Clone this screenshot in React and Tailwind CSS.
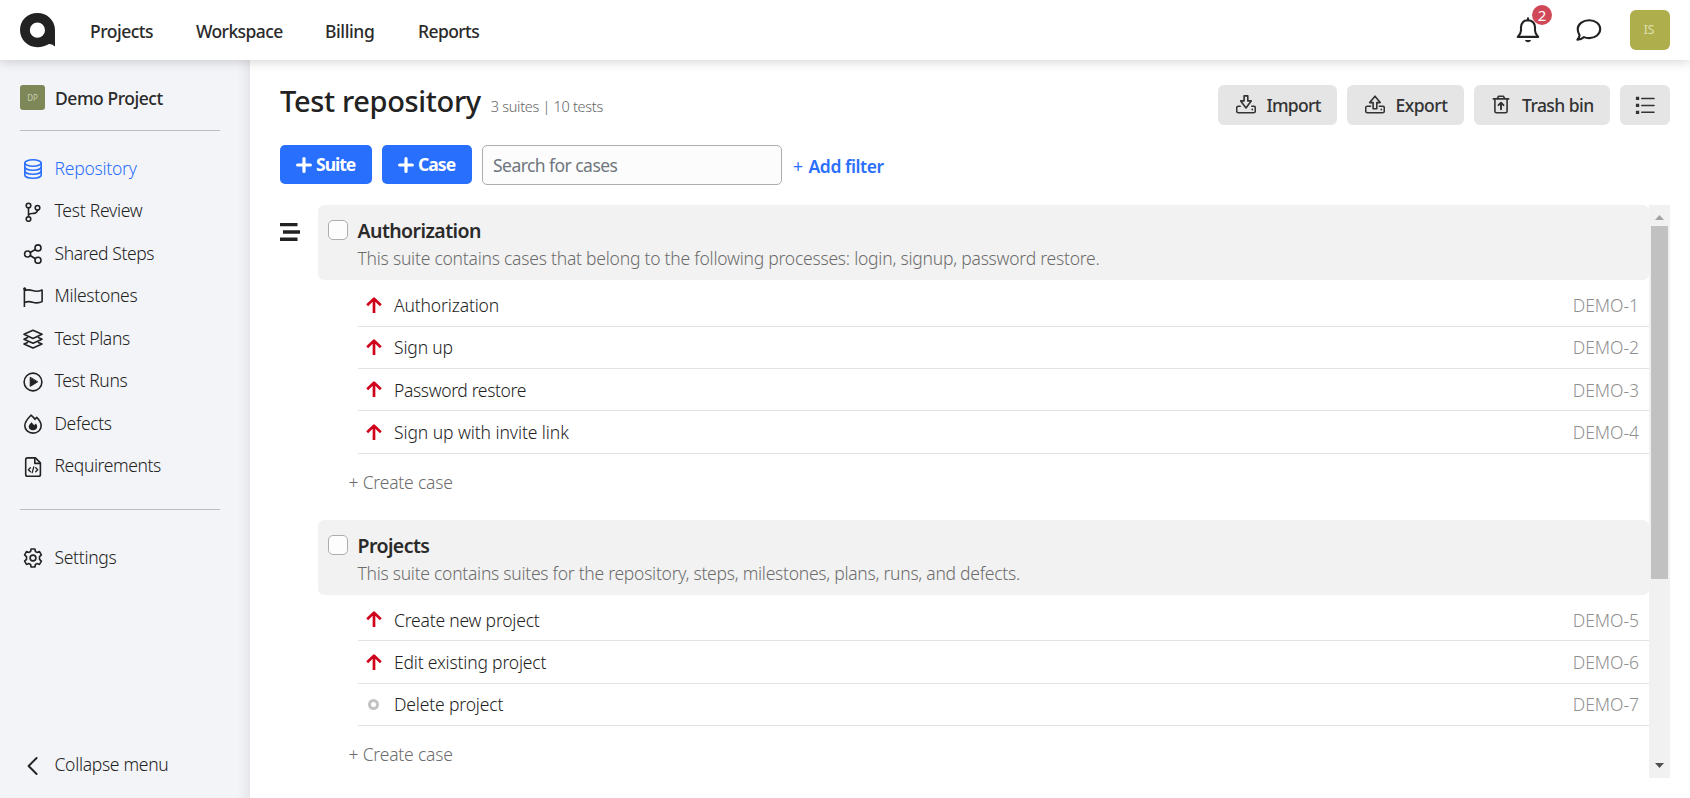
import React from "react";

const paths = {
  database: (
    <>
      <ellipse cx="10" cy="4" rx="8.2" ry="3.2" />
      <path d="M1.8 4v12c0 1.8 3.6 3.2 8.2 3.2s8.2-1.4 8.2-3.2V4" />
      <path d="M1.8 8c0 1.8 3.6 3.2 8.2 3.2S18.2 9.8 18.2 8M1.8 12c0 1.8 3.6 3.2 8.2 3.2s8.2-1.4 8.2-3.2" />
    </>
  ),
  branch: (
    <>
      <circle cx="5.5" cy="3.5" r="2.3" />
      <circle cx="14.5" cy="5.8" r="2.3" />
      <circle cx="5.5" cy="17" r="2.3" />
      <path d="M5.5 5.8v8.9M5.5 13.200c.6-1.200 1.600-1.700 3.600-1.700 3 0 5.200-.7 5.400-3.400" />
    </>
  ),
  share: (
    <>
      <circle cx="4.600" cy="10" r="3" />
      <circle cx="15" cy="3.900" r="3" />
      <circle cx="15" cy="16.300" r="3" />
      <path d="m7.200 8.500 5.200-3M7.200 11.500l5.200 3.200" />
    </>
  ),
  flag: (
    <>
      <path d="M1.400 1.500V19.600M1.400 3.600c3-1.300 5.300-.9 8.100 0 3.200 1.100 6.200.9 9.600-.6v11.600c-3.200 1.600-6.200 1.600-9.600.6-3-.9-5.400-.8-8.100.4" />
      <circle cx="1.700" cy="1.700" r="1.500" fill="currentColor" stroke="none" />
    </>
  ),
  layers: (
    <>
      <path d="M10 1.200 19 5.300 10 9.400 1 5.300z" />
      <path d="M4.600 8.600 1 10.200l9 4.100 9-4.100-3.600-1.600" />
      <path d="M4.600 13.400 1 15l9 4.100L19 15l-3.600-1.600" />
    </>
  ),
  play: (
    <>
      <circle cx="10" cy="10" r="8.900" />
      <path d="M7.200 5.600v8.800l7.200-4.400z" fill="currentColor" strokeWidth="1" />
    </>
  ),
  fire: (
    <>
      <path d="M8 1.200c1.500 1.200 2.800 2.500 4 4.100.5-.7 1-1.300 1.700-1.900 2.500 2.500 4.500 5.600 4.500 8.200 0 4.400-3.500 7.500-8.200 7.500s-8.200-3.200-8.200-7.500C1.800 8.500 4.600 4.600 8 1.200z" />
      <path d="M8.500 8.200c1 1 1.700 1.900 2.700 3l1.700-1.700c1.300 1.700 1.500 2.900 1.200 4.100-.5 1.800-2 2.700-4.100 2.700-2.500 0-4.300-1.400-4.300-3.600 0-1.500 1.300-2.900 2.800-4.500z" fill="currentColor" stroke="none" />
    </>
  ),
  filecode: (
    <>
      <path d="M4.400.9h8l5 5v11.500c0 1-.7 1.800-1.700 1.800H4.400c-1 0-1.700-.8-1.700-1.800V2.700c0-1 .7-1.800 1.700-1.800z" />
      <path d="M11.800 1.200v5.200H17" />
      <path d="m7.400 10.700-2 2 2 2M12.700 10.700l2 2-2 2M10.800 9.800l-1.600 5.900" strokeWidth="1.300" />
    </>
  ),
  gear: (
    <>
      <path d="M8.100 1h3.800l.5 2.500 1.600.9 2.500-.8 1.900 3.200-1.900 1.800v2.800l1.900 1.800-1.900 3.200-2.500-.8-1.600.9-.5 2.500H8.100l-.5-2.500-1.600-.9-2.500.8-1.900-3.200 1.900-1.800V8.600L1.600 6.800l1.900-3.200 2.500.8 1.600-.9z" />
      <circle cx="10" cy="10" r="2.900" />
    </>
  ),
  back: <path d="m14.600 2-8 8 8 8" strokeWidth="1.900" />,
  bars: <path d="M0 2.600h17.500M3 10h17M0 17.200h17.500" strokeWidth="3.400" strokeLinecap="butt" />,
  importBox: (
    <>
      <path d="M8.100.9h3.700v5h3.400L10 12.900 4.700 5.900h3.400z" />
      <path d="M4.200 11.300H2.300c-1 0-1.600.6-1.600 1.500v3.400c0 .9.600 1.500 1.600 1.500h15.400c1 0 1.600-.6 1.600-1.500v-3.400c0-.9-.6-1.500-1.600-1.500h-1.900" />
      <circle cx="16.300" cy="14.500" r=".9" fill="currentColor" stroke="none" />
    </>
  ),
  exportBox: (
    <>
      <path d="M10 1.200 4.700 7.600h3.400v6.200h3.700V7.600h3.400z" />
      <path d="M5.600 11.300H2.300c-1 0-1.600.6-1.600 1.500v3.400c0 .9.600 1.500 1.600 1.500h15.400c1 0 1.600-.6 1.600-1.500v-3.400c0-.9-.6-1.500-1.600-1.500h-3.300" />
      <circle cx="16.300" cy="14.500" r=".9" fill="currentColor" stroke="none" />
    </>
  ),
  trash: (
    <>
      <path d="M2.300 3.900h15.400M6.300 3.700 7.500 1.300h5l1.200 2.400M3.900 4v12.300c0 .9.600 1.500 1.500 1.500h9.200c.9 0 1.500-.6 1.500-1.500V4" />
      <path d="M10 14.200V8M7.500 10.200 10 7.700l2.500 2.500" strokeWidth="1.900" />
    </>
  ),
  list: (
    <>
      <path d="M6.800 3.500H19M6.800 10.500H19M6.800 17.300H19" />
      <path d="M.9 1.800h3.300v3.300H.9zM.9 8.800h3.300v3.300H.9zM.9 15.700h3.300V19H.9z" fill="currentColor" stroke="none" />
    </>
  ),
  arrow: <path d="M8 16V2M1.200 8.300 8 1.600l6.800 6.700" strokeWidth="2.700" strokeLinecap="butt" />,
};

function Icon({ name, className = "size-5", box = "0 0 20 20" }) {
  return (
    <svg viewBox={box} className={className} fill="none" stroke="currentColor" strokeWidth="1.600" strokeLinecap="round" strokeLinejoin="round">
      {paths[name]}
    </svg>
  );
}

const nav = [
  ["Projects", "w-[106px] tracking-[-0.5px]"],
  ["Workspace", "w-[129px] tracking-[-0.6px]"],
  ["Billing", "w-[93px] tracking-[-0.4px]"],
  ["Reports", "tracking-[-0.6px]"],
];

const menu = [
  ["database", "Repository", "tracking-[-0.25px]"],
  ["branch", "Test Review", "tracking-[-0.25px]"],
  ["share", "Shared Steps", "tracking-[-0.4px]"],
  ["flag", "Milestones", "tracking-[-0.3px]"],
  ["layers", "Test Plans", "tracking-[-0.35px]"],
  ["play", "Test Runs", "tracking-[-0.35px]"],
  ["fire", "Defects", "tracking-[-0.35px]"],
  ["filecode", "Requirements", "tracking-[-0.42px]"],
];

const suites = [
  {
    title: "Authorization",
    about: "This suite contains cases that belong to the following processes: login, signup, password restore.",
    aboutTracking: "tracking-[-0.23px]",
    cases: [
      ["DEMO-1", "Authorization", true, "tracking-[-0.15px]"],
      ["DEMO-2", "Sign up", true, "tracking-[-0.15px]"],
      ["DEMO-3", "Password restore", true, "tracking-[-0.36px]"],
      ["DEMO-4", "Sign up with invite link", true, "tracking-[-0.08px]"],
    ],
  },
  {
    title: "Projects",
    about: "This suite contains suites for the repository, steps, milestones, plans, runs, and defects.",
    aboutTracking: "tracking-[-0.265px]",
    cases: [
      ["DEMO-5", "Create new project", true, "tracking-[-0.2px]"],
      ["DEMO-6", "Edit existing project", true, "tracking-[-0.18px]"],
      ["DEMO-7", "Delete project", false, "tracking-[-0.15px]"],
    ],
  },
];

function Header() {
  return (
    <header className="relative z-10 flex h-[60px] shrink-0 items-center bg-white pr-5 pl-5 shadow-[0_0_12px_rgba(0,0,0,0.22)]">
      <svg viewBox="0 0 36 36" className="size-9 shrink-0 text-[#222]">
        <path fill="currentColor" fillRule="evenodd" d="M17.400 1C27.200 1 35 8.500 35 18v16.500c-1.900-1.700-3.900-2.500-6-2.500-3.200 1.800-7.200 3.200-11.600 3.200C7.800 35.200 0 27.800 0 18S7.800 1 17.400 1zm0 9.600a7.600 7.600 0 1 0 0 15.200 7.600 7.600 0 0 0 0-15.200z" />
      </svg>
      <nav className="ml-[34px] flex pt-[3px] text-[17.5px] font-[500] text-[#2a2a2a]">
        {nav.map(([t, c]) => (
          <a key={t} className={c}>{t}</a>
        ))}
      </nav>
      <div className="ml-auto flex items-center text-[#222]">
        <div className="relative mr-[36px]">
          <svg viewBox="0 0 24 26" className="h-[26px] w-6" fill="none" stroke="currentColor" strokeWidth="2.100" strokeLinecap="round" strokeLinejoin="round">
            <path d="M12 1.200v2M12 3.200c-4.300 0-7 3-7 7v3.300c0 2.600-1.500 4.600-3.200 6.400h20.400c-1.700-1.800-3.200-3.800-3.200-6.400v-3.300c0-4-2.700-7-7-7z" />
            <path d="M9 23h6c-.3 1.400-1.400 2.200-3 2.200S9.300 24.400 9 23z" fill="currentColor" stroke="none" />
          </svg>
          <span className="absolute -top-[12px] left-[16px] flex size-5 items-center justify-center rounded-full bg-[#d04858] pt-px text-[15px] text-white">2</span>
        </div>
        <svg viewBox="0 0 26 24" className="mr-[28px] h-6 w-[26px]" fill="none" stroke="currentColor" strokeWidth="2.100" strokeLinejoin="round">
          <path d="M13.200 2.200c6.300 0 11 4 11 8.900s-4.700 9-11 9c-1.900 0-3.700-.3-5.200-1-1.800 1.500-4 2.400-6.600 2.500 1.200-1.300 2-2.700 2.200-4.200C2.500 15.600 1.700 13.500 1.700 11.100c0-4.900 5-8.900 11.500-8.900z" />
        </svg>
        <div className="flex size-10 items-center justify-center rounded-md bg-[#aeaf4c] pr-[2px] text-[12px] text-[#dfe0b0]">IS</div>
      </div>
    </header>
  );
}

function Sidebar() {
  return (
    <aside className="flex w-[250px] shrink-0 flex-col bg-[#f3f4f7] px-5 pt-[25px] shadow-[inset_-14px_0_14px_-12px_rgba(0,0,0,0.09)]">
      <div className="flex h-[25px] items-center">
        <div className="flex size-[25px] items-center justify-center rounded-[3px] bg-[#7e8757] text-[8px] text-[#c9cdb5]">DP</div>
        <div className="ml-2.5 pt-0.5 text-[17.5px] font-[500] tracking-[-0.45px] text-[#2a2a2a]">Demo Project</div>
      </div>
      <hr className="mt-5 w-[200px] border-[#bbbcbf]" />
      <nav className="mt-[17px] flex flex-col">
        {menu.map(([icon, label, c], i) => (
          <a key={label} className={i === 0 ? "flex h-[42.5px] items-center text-[#2a6ffd]" : "flex h-[42.5px] items-center text-[#222]"}>
            <Icon name={icon} className="ml-[2.5px] size-5 shrink-0" />
            <span className={`ml-[12px] pb-[3px] text-[17.5px] font-light ${c}`}>{label}</span>
          </a>
        ))}
      </nav>
      <hr className="mt-[21px] w-[200px] border-[#bbbcbf]" />
      <a className="mt-[27px] flex h-[42.5px] items-center text-[#222]">
        <Icon name="gear" className="ml-[2.5px] size-5" />
        <span className="ml-[12px] pb-[3px] text-[17.5px] font-light tracking-[-0.3px]">Settings</span>
      </a>
      <a className="mt-auto mb-[11px] flex h-[42.5px] items-center text-[#222]">
        <Icon name="back" className="ml-[1.500px] size-5" />
        <span className="ml-[13px] pb-[4px] text-[17.5px] font-light tracking-[-0.3px]">Collapse menu</span>
      </a>
    </aside>
  );
}

function GreyButton({ icon, label, width, tracking, iconGap }) {
  return (
    <button className={`flex h-10 items-center rounded-md bg-[#e5e5e5] text-[17.5px] font-[500] text-[#333] ${width} ${tracking}`}>
      <Icon name={icon} className={`h-5 w-5 ${iconGap}`} />
      <span>{label}</span>
    </button>
  );
}

function Plus() {
  return (
    <svg viewBox="0 0 16 16" className="size-4" stroke="currentColor" strokeWidth="3.200" strokeLinecap="round">
      <path d="M8 1.600v12.800M1.600 8h12.800" />
    </svg>
  );
}

function Suite({ suite }) {
  return (
    <section>
      <div className="flex h-[75px] rounded-md bg-[#f2f2f2] pl-2.5">
        <span className="mt-[15px] size-5 shrink-0 rounded-[5px] border border-[#adadad] bg-[#fdfdfd]" />
        <div className="ml-[9.500px] flex flex-col pt-[11px]">
          <div className="text-[19.5px] leading-[29px] font-[600] tracking-[-0.57px] text-[#2a2a2a]">{suite.title}</div>
          <div className={`text-[17.5px] leading-[27px] font-light text-[#6c6c6c] ${suite.aboutTracking}`}>{suite.about}</div>
        </div>
      </div>
      <div className="mt-[4.5px] ml-10">
        {suite.cases.map(([id, name, high, tracking]) => (
          <div key={id} className="flex h-[42.3px] items-center border-b border-[#e2e2e2] pr-2.5 pl-2">
            <span className="flex w-4 shrink-0 justify-center">
              {high ? (
                <Icon name="arrow" box="0 0 16 17" className="h-[17px] w-4 text-[#d0021b]" />
              ) : (
                <span className="mr-px size-[11px] rounded-full border-3 border-[#c2c2c2]" />
              )}
            </span>
            <span className={`ml-3 text-[17.5px] font-light text-[#222] ${tracking}`}>{name}</span>
            <span className="ml-auto text-[17.5px] font-light tracking-[-0.05px] text-[#8f8f8f]">{id}</span>
          </div>
        ))}
      </div>
      <div className="ml-[30.500px] flex h-[66px] items-center pb-[9px] text-[17.5px] font-light tracking-[-0.2px] text-[#6c6c6c]">+ Create case</div>
    </section>
  );
}

export default function App() {
  return (
    <div className="flex h-[798px] w-[1690px] flex-col overflow-hidden bg-white font-['Noto_Sans',sans-serif]">
      <Header />
      <div className="flex min-h-0 flex-1">
        <Sidebar />
        <main className="flex min-w-0 flex-1 flex-col pt-[25px] pr-5 pb-5 pl-[30px]">
          <div className="flex h-10 items-start">
            <h1 className="-mt-[2px] text-[29px] leading-[36px] font-[500] tracking-[-0.35px] text-[#222]">Test repository</h1>
            <span className="mt-[10px] ml-2.5 text-[14.5px] leading-[22px] font-light tracking-[-0.3px] text-[#666]">3 suites | 10 tests</span>
            <div className="ml-auto flex gap-2.5">
              <GreyButton icon="importBox" label="Import" width="w-[119px]" tracking="tracking-[-0.7px]" iconGap="ml-[18px] mr-[10.5px]" />
              <GreyButton icon="exportBox" label="Export" width="w-[117px]" tracking="tracking-[-0.5px]" iconGap="ml-[18px] mr-[10.5px]" />
              <GreyButton icon="trash" label="Trash bin" width="w-[136px]" tracking="tracking-[-0.55px]" iconGap="ml-[17px] mr-[11px]" />
              <GreyButton icon="list" width="w-[50px]" tracking="tracking-normal" iconGap="ml-[15px]" />
            </div>
          </div>
          <div className="mt-5 flex h-10 items-start">
            <button className="flex h-[39px] w-[92px] items-center gap-1 rounded-[5px] bg-[#296ffd] pl-4 text-[17.5px] font-[700] tracking-[-1px] text-white"><Plus />Suite</button>
            <button className="ml-2.5 flex h-[39px] w-[90px] items-center gap-1 rounded-[5px] bg-[#296ffd] pl-4 text-[17.5px] font-[700] tracking-[-0.95px] text-white"><Plus />Case</button>
            <div className="ml-2.5 flex h-10 w-[300px] items-center rounded-[5px] border border-[#adadad] bg-[#fcfcfc] pl-2.5 text-[17.5px] tracking-[-0.55px] text-[#6f767d]">Search for cases</div>
            <a className="ml-[11px] flex h-10 items-center gap-[6px] pt-[3px] text-[17.5px] font-[600] tracking-[-0.45px] text-[#2a6ffd]"><span className="font-[400]">+</span>Add filter</a>
          </div>
          <div className="mt-5 flex min-h-0 flex-1">
            <div className="w-[38px] shrink-0 pt-[17px] text-[#222]"><Icon name="bars" /></div>
            <div className="min-w-0 flex-1 overflow-hidden">
              {suites.map((s) => <Suite key={s.title} suite={s} />)}
            </div>
            <div className="flex w-[21px] shrink-0 flex-col items-center bg-[#f1f1f1]">
              <div className="flex h-[21px] items-center"><svg viewBox="0 0 9 5" className="mt-1 h-[5px] w-[9px]"><path d="M4.500 0 9 5H0z" fill="#a3a3a3" /></svg></div>
              <div className="h-[353px] w-[17px] bg-[#c1c1c1]" />
              <div className="mt-auto flex h-[21px] items-center"><svg viewBox="0 0 9 5" className="mb-1 h-[5px] w-[9px]"><path d="M0 0h9L4.500 5z" fill="#505050" /></svg></div>
            </div>
          </div>
        </main>
      </div>
    </div>
  );
}
